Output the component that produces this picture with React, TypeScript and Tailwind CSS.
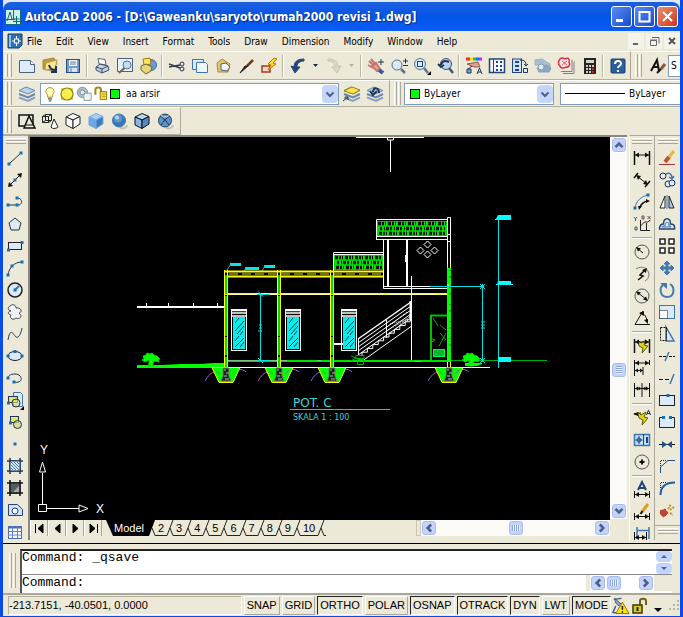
import type { ReactNode } from "react";

type Tool = { label: string; icon: ReactNode };

const NAVY = "#1d3557";
const BLUE = "#3f76ad";
const PALE = "#dbe9f8";

const dot = (x: number, y: number) => (
  <rect key={`${x}-${y}`} x={x - 1.5} y={y - 1.5} width="3" height="3" fill="#1670b8" stroke="none" />
);

const arrowUp = <path d="M4 10.500 L8 6.500 L12 10.500" fill="none" stroke="#4d6185" strokeWidth="3" />;

function Icon({ children, size = "h-5 w-5" }: { children: ReactNode; size?: string }) {
  return (
    <svg viewBox="0 0 20 20" className={`${size} shrink-0`} fill="none" stroke={NAVY} aria-hidden="true">
      {children}
    </svg>
  );
}

const sheets = (
  <>
    <path d="M2 6.500 L9 3 L18 6.500 L11 10Z" fill="#b9d4ee" stroke="#6b87ab" />
    <path d="M2 10 L11 13.500 L18 10" stroke="#6b87ab" strokeWidth="2" />
    <path d="M2 13.500 L11 17 L18 13.500" stroke="#8aa2c0" strokeWidth="2" />
  </>
);

const fileTools: Tool[] = [
  { label: "New", icon: <><path d="M2.500 4.500h11l4 4v8h-15z" fill="#dcecf9" stroke="#4a6180" /><path d="M13.500 4.500v4h4" fill="#fff" stroke="#4a6180" /></> },
  { label: "Open", icon: <><path d="M3 4 L14 2 L17 7 L12 15 L3 13Z" fill="#c59a35" stroke="#a08a4a" /><path d="M6 7 L17 4 L15 13 L5 14Z" fill="#fbe993" stroke="#b59c48" /><path d="M9 9c1 4 3 5 6 5M16 10v6h-5" strokeWidth="2" /></> },
  { label: "Save", icon: <><rect x="3.500" y="3.500" width="13" height="13" fill="#729bd0" stroke="#244c86" /><rect x="6" y="4" width="8" height="6" fill="#eef5fc" stroke="none" /><rect x="6" y="12" width="8" height="4" fill="#dbe4ee" stroke="none" /><path d="M7 6h6M7 8h6M8 12v4" stroke="#5c7fad" /></> },
];

const plotTools: Tool[] = [
  { label: "Plot", icon: <><path d="M6 2.500 L13 3.500 L14 9 L7 8Z" fill="#fff" stroke="#56657c" /><path d="M4 11 L8 8 L16 10 L17 14 L10 17 L4 14Z" fill="#c5d0de" stroke="#3d4c66" /><path d="M4 11 L10 13 L16 10M10 13v4" stroke="#3d4c66" /></> },
  { label: "Plot Preview", icon: <><path d="M2.500 2.500h15v13h-15z" fill="#e7f1fb" stroke="#4a6180" /><circle cx="12" cy="9" r="4" fill="#c2dcf3" stroke="#5c7086" /><path d="M9.500 12 L4 17" stroke="#7b5d50" strokeWidth="2" /></> },
  { label: "Publish", icon: <><circle cx="13" cy="9" r="5.500" fill="#6e9bd0" stroke="#3f6da5" /><path d="M5 3 L12 2 L13 8 L6 9Z" fill="#ffe45e" stroke="#a07c10" /><path d="M3 10 L8 8 L14 11 L13 15 L8 18 L3 14Z" fill="#e6d77a" stroke="#6b6635" /></> },
];

const clipTools: Tool[] = [
  { label: "Cut", icon: <><path d="M2 8 L13 12 M2 11 L13 9" stroke="#333d4e" strokeWidth="1.500" /><circle cx="15" cy="8" r="2" /><circle cx="15" cy="13" r="2" /></> },
  { label: "Copy", icon: <><path d="M2.500 3.500h11v10h-11z" fill="#dbe9f8" stroke={BLUE} /><path d="M6.500 6.500h9l2 2v8h-11z" fill="#eef5fc" stroke={BLUE} /></> },
  { label: "Paste", icon: <><path d="M4 7 L9 3 L17 8 L15 16 L5 16Z" fill="#e9c567" stroke="#a88445" /><path d="M8 8 L13 7 L17 11 L14 15 L8 14Z" fill="#eef5fc" stroke="#4a6180" /></> },
  { label: "Match Properties", icon: <><path d="M17 4 L11 10" stroke="#7b3a1c" strokeWidth="2.500" /><path d="M12 10 L4 17 L9 10Z" fill="#222" stroke="#222" /></> },
  { label: "Block Editor", icon: <><rect x="3" y="10" width="8" height="6" fill="#f4d8c8" stroke="#a4382a" strokeWidth="1.500" /><path d="M15 2 L9 8 L12 9 L9 14 L17 8 L14 7 L18 3Z" fill="#ffd626" stroke="#b07a00" /></> },
];

const undoIcon = <path d="M16 3 C9 3 6 6 6 11 L3 10 L7 17 L12 11 L9 11 C9 7 12 5 16 5Z" fill="#24447c" stroke="#24447c" />;
const redoIcon = <path d="M4 3 C11 3 14 6 14 11 L17 10 L13 17 L8 11 L11 11 C11 7 8 5 4 5Z" fill="#dbd9ce" stroke="#c3c1b6" />;

const zoomTools: Tool[] = [
  { label: "Pan", icon: <><path d="M3 5 L8 10 M5 3 L10 9 M2 9 L7 12 M6 10 L10 7 L14 13 L11 15Z" stroke="#c7766e" strokeWidth="2" fill="#e8a79c" /><path d="M13 14 L17 17" stroke="#315f9c" strokeWidth="4" /><path d="M15 3v6M12 6h6" /></> },
  { label: "Zoom Realtime", icon: <><circle cx="8" cy="9" r="5" fill="#d7eaf8" stroke="#5f7286" /><path d="M12 13 L16 17" stroke="#5f7286" strokeWidth="2.500" /><path d="M14 5h5M16.500 2.500v5M14 9.500h5" /></> },
  { label: "Zoom Window", icon: <><circle cx="8" cy="8" r="5.500" fill="#d7eaf8" stroke="#5f7286" /><rect x="5.500" y="5.500" width="5" height="5" stroke="#24447c" /><path d="M12 12 L16 17" stroke="#5f7286" strokeWidth="2.500" /><path d="M19 15v4h-4z" fill="#000" stroke="none" /></> },
  { label: "Zoom Previous", icon: <><circle cx="11" cy="8" r="5.500" fill="#b9d4ee" stroke="#415671" /><path d="M14 12 L18 17" stroke="#415671" strokeWidth="2.500" /><path d="M14 6 C10 4 7 5 6 9 M3 8 L6 11 L9 9" strokeWidth="2" /></> },
];

const paletteTools: Tool[] = [
  { label: "Properties", icon: <><path d="M2 3h4" stroke="#f22" strokeWidth="3" /><path d="M6 3h3" stroke="#fd0" strokeWidth="3" /><path d="M9 3h3" stroke="#1c3" strokeWidth="3" /><path d="M12 3h3" stroke="#16f" strokeWidth="3" /><path d="M15 3h3" stroke="#e1f" strokeWidth="3" /><path d="M3 8 L14 6 L16 11 L10 11Z" fill="#e2a096" stroke="#9b5448" /><path d="M3 14 L8 10M13 18l2.500-6 2.500 6M14 16h3" /><path d="M3 13h4v4h-4z" fill="#7ba3d6" stroke={NAVY} /></> },
  { label: "DesignCenter", icon: <><rect x="2.500" y="3" width="15" height="13.500" fill="#f3f8fd" stroke="#24447c" strokeWidth="1.500" /><path d="M6.500 3v13" stroke="#24447c" /><path d="M9 6h2M13 6h2M9 10h2M13 10h2M9 14h2M13 14h2" stroke="#24447c" strokeWidth="2" /></> },
  { label: "Tool Palettes", icon: <><rect x="2.500" y="3" width="9" height="13.500" fill="#cfe3f7" stroke="#24447c" /><path d="M5 6h4M5 10h4M5 14h4" stroke="#24447c" strokeWidth="2" /><path d="M10 4 C15 4 16 6 16 9" /><path d="M13.500 12.500h4v4h-4z" fill="#dbe9f8" /><path d="M14 8l2 2 2-2" /></> },
  { label: "Sheet Set Manager", icon: <><path d="M2 4 L9 3 L17 8 L17 12 L9 9 L2 9Z" fill="#a9bfd5" stroke="#9fb0c1" /><path d="M4 12 L14 9 L18 12 L16 16 L6 16Z" fill="#8ca7c4" stroke="#8b9fb4" /><circle cx="8" cy="11" r="3" fill="#dce9f3" stroke="#8599ae" /></> },
  { label: "Markup Set Manager", icon: <><path d="M7 17.500h11v-12M5 15.500h11v-12" stroke="#7d7f86" /><path d="M4 3 C6 1 9 3 9 3 C12 1 14 3 13 6 C15 9 12 12 10 11 C7 13 4 12 4 10 C2 9 2 5 4 3Z" fill="#fbe3e4" stroke="#dc2e45" strokeWidth="1.500" /><path d="M6 5l5 4M11 5l-5 4" stroke="#e0566a" /></> },
  { label: "QuickCalc", icon: <><rect x="5.500" y="2.500" width="11" height="15" fill="#2c2020" stroke="#2c2020" /><rect x="7" y="4" width="8" height="3" fill="#cfd8cf" stroke="none" /><path d="M7 10h2M10 10h2M13 10h2M7 13h2M10 13h2M7 16h2M10 16h2" stroke="#fff" strokeWidth="1.500" /><path d="M13 13h2M13 16h2" stroke="#e33" strokeWidth="1.500" /></> },
];

const helpIcon = <><rect x="3" y="3" width="14" height="14" rx="1" fill="#2c5f9a" stroke="#193f6e" /><path d="M7 8 C7 4 13 4 13 7.500 C13 10 10 9.500 10 12M10 14v2" stroke="#fff" strokeWidth="2" /></>;

const cube = (top: string, front: string, side: string, stroke: string) => (
  <>
    <path d="M3 6 L10 2.500 L17 5.500 L10 9Z" fill={top} stroke={stroke} />
    <path d="M3 6 L10 9 V17.500 L3 14Z" fill={front} stroke={stroke} />
    <path d="M10 9 L17 5.500 V13 L10 17.500Z" fill={side} stroke={stroke} />
  </>
);

const shadeTools: Tool[] = [
  { label: "2D Wireframe", icon: <><path d="M2 4h14v11H2z" stroke="#111" strokeWidth="1.500" /><path d="M12 5 L18 17 H7Z" fill="#ece9d8" stroke="#111" strokeWidth="1.500" /><path d="M9 14h7" stroke="#111" /></> },
  { label: "3D Wireframe", icon: <><path d="M2.500 5.500h6v6h-6zM5.500 3.500h6v6h-6zM2.500 5.500l3-2M8.500 5.500l3-2M2.500 11.500l3-2M8.500 11.500l3-2" stroke="#222" /><path d="M14 8 L11 16 C12 18 16 18 18 16Z" fill="#fff" stroke="#222" /></> },
  { label: "Hidden", icon: cube("#fff", "#fff", "#fff", "#222") },
  { label: "Flat Shaded", icon: cube("#a6d0f8", "#6da9e6", "#3e78be", "#75a7dd") },
  { label: "Gouraud Shaded", icon: <><path d="M11 17c5 1 7-1 7-3" stroke="#c2c0b4" strokeWidth="2" /><circle cx="10" cy="9.500" r="6.500" fill="#3b78b2" stroke="#3b78b2" /><circle cx="9" cy="7.500" r="4" fill="#5f98cc" stroke="none" /><circle cx="8" cy="6.500" r="2" fill="#b4d8f4" stroke="none" /></> },
  { label: "Flat Shaded, Edges On", icon: cube("#b5d7f6", "#86b5e6", "#5587c2", "#111") },
  { label: "Gouraud Shaded, Edges On", icon: <><path d="M11 17c5 1 7-1 7-3" stroke="#c2c0b4" strokeWidth="2" /><circle cx="10" cy="9.500" r="6.500" fill="#5b91c6" stroke="#253f60" /><path d="M5 5 C9 7 12 11 14 14M15 5 C11 7 8 11 6 14" stroke="#1d3557" /><path d="M6 4.500 C9 6.500 12 6.500 14 4.500" stroke="#cfe2f4" /></> },
];

const drawTools: Tool[] = [
  { label: "Line", icon: <><path d="M4 16 L16 5" />{dot(4, 16)}{dot(16, 5)}</> },
  { label: "Construction Line", icon: <><path d="M4 16 L16 4" stroke="#111" /><path d="M3 17l1-5 4 4zM17 3l-1 5-4-4z" fill="#111" stroke="none" />{dot(10, 10)}</> },
  { label: "Polyline", icon: <><path d="M3 13 H13 C18 13 18 6 12 6" />{dot(3, 13)}{dot(12, 13)}{dot(12, 6)}</> },
  { label: "Polygon", icon: <path d="M10 4 L16 9 L14 16 H6 L4 9Z" fill={PALE} stroke="#333" /> },
  { label: "Rectangle", icon: <><rect x="3.500" y="6.500" width="13" height="7" fill={PALE} stroke="#222" />{dot(3.5, 14)}{dot(17, 6.5)}</> },
  { label: "Arc", icon: <><path d="M3 17 C4 10 9 4 17 4" />{dot(3, 17)}{dot(7, 8)}{dot(17, 4)}</> },
  { label: "Circle", icon: <><circle cx="10" cy="10" r="7" fill={PALE} stroke="#222" strokeWidth="1.500" /><path d="M10 10 L14 6" stroke={BLUE} strokeWidth="2" />{dot(10, 10)}</> },
  { label: "Revision Cloud", icon: <path d="M5 4 C9 1 11 4 11 6 C16 5 18 10 14 11 C18 14 15 18 11 16 C8 19 4 16 6 13 C2 12 3 9 6 9 C2 8 3 5 5 4Z" fill="#f0f3f6" stroke="#3d4450" /> },
  { label: "Spline", icon: <path d="M3 16 C5 4 8 9 10 12 C13 16 16 10 17 4" /> },
  { label: "Ellipse", icon: <><ellipse cx="10" cy="10" rx="7" ry="4.500" fill={PALE} stroke="#222" />{dot(3, 10)}{dot(17, 10)}{dot(10, 5.5)}</> },
  { label: "Ellipse Arc", icon: <><path d="M9 14 C19 16 18 6 10 6 C5 6 3 8 3 10" />{dot(3, 10)}{dot(9, 14)}</> },
  { label: "Insert Block", icon: <><path d="M8.500 2.500h7l2 2v12h-9z" fill={PALE} stroke={BLUE} /><rect x="3.500" y="6.500" width="9" height="6" fill="#e1ea62" /><circle cx="11" cy="13" r="4" fill="#cfd98a" fillOpacity=".7" stroke="#333" /><path d="M19 16v4h-4z" fill="#000" stroke="none" />{dot(3.5, 13)}</> },
  { label: "Make Block", icon: <><rect x="5.500" y="4.500" width="8" height="6" fill="#e1ea62" /><circle cx="12.500" cy="12.500" r="4" fill="#cfd98a" fillOpacity=".7" stroke="#333" />{dot(5.5, 11)}</> },
  { label: "Point", icon: dot(10, 10) },
  { label: "Hatch", icon: <><path d="M2 5h16M2 15h16M5 2v16M15 2v16" strokeWidth="1.500" /><path d="M5 5h10v10H5z" fill="#d9e9f8" /><path d="M6 6l8 8M9 6l5 5M6 9l5 5M12 6l2 2M6 12l2 2" stroke={BLUE} /></> },
  { label: "Gradient", icon: <><path d="M2 5h16M2 15h16M5 2v16M15 2v16" stroke="#111" strokeWidth="1.500" /><path d="M5 5h10v10H5z" fill="#555b60" stroke="#111" /><path d="M8 14l6-6v6z" fill="#a3a8ac" stroke="none" /></> },
  { label: "Region", icon: <><path d="M3.500 4.500h9l5 5v6h-14z" fill="#cfe2f5" stroke="#24447c" /><circle cx="10" cy="11" r="3" fill="#fff" stroke="#24447c" /></> },
  { label: "Table", icon: <><rect x="3.500" y="4.500" width="13" height="12" fill="#fff" stroke="#4c6db0" /><path d="M3 5.500h14" stroke="#4c6db0" strokeWidth="2" /><path d="M3 9.500h14M3 13h14M7.500 4v12M12.500 4v12" stroke="#5c84cc" /></> },
];

const hDim = (y: number, a = 3, b = 17) => (
  <>
    <path d={`M${a} ${y} H${b}`} stroke="#111" />
    <path d={`M${a} ${y} l4 -2.500v5zM${b} ${y} l-4 -2.500v5z`} fill="#111" stroke="none" />
  </>
);

const bolt = <path d="M9 7 L6 4 L7 10 L11 12 L10 17 L16 10 L12 9 L14 4Z" fill="#e2d21a" stroke="#5f5a00" />;

const dimensionGroups: Tool[][] = [
  [
    { label: "Linear Dimension", icon: <><path d="M2.500 3v14M17.500 3v14" stroke="#111" strokeWidth="1.500" />{hDim(7)}</> },
    { label: "Aligned Dimension", icon: <><path d="M5 6 L15 14" stroke="#111" /><path d="M2 8l4-5M13 17l5-6" stroke="#111" strokeWidth="1.500" /><path d="M4 5l5 1-3 4zM16 15l-5-1 3-4z" fill="#111" stroke="none" /></> },
    { label: "Arc Length", icon: <><path d="M3 16 C4 9 9 4 17 3" stroke={BLUE} /><path d="M8 16 C8 13 12 9 16 9" stroke="#111" strokeWidth="1.500" /><path d="M7 18l-1-4h4zM18 9l-4-2v4z" fill="#111" stroke="none" />{dot(3, 16)}{dot(16, 3)}</> },
    { label: "Ordinate Dimension", icon: <><path d="M8.500 6v10.500H18M8.500 12l4-4M12.500 8h3l3-2M14.500 9v7" stroke="#222" /><path d="M2 3l1.500 2L5 3M3.500 5v2M10 2h2v3h-2zM15.500 2l3 3M18.500 2l-3 3M3 13h2v3H3z" stroke="#555" /></> },
  ],
  [
    { label: "Radius Dimension", icon: <><circle cx="10" cy="10" r="7" stroke="#555" /><path d="M11 11 L5 6" stroke="#111" /><path d="M4 5l5 1.500-3 3z" fill="#111" stroke="none" /></> },
    { label: "Jogged Radius", icon: <><path d="M4 5 C10 1 16 4 17 10 C17 14 15 16 13 17" stroke="#777" /><path d="M6 16 L11 12 L8 11 L13 6" stroke="#111" strokeWidth="1.500" /><path d="M15 4l-1 5-4-3z" fill="#111" stroke="none" /></> },
    { label: "Diameter Dimension", icon: <><circle cx="10" cy="10" r="7" stroke="#555" /><path d="M5 6 L15 14" stroke="#111" /><path d="M4 5l5 1.500-3 3zM16 15l-5-1.500 3-3z" fill="#111" stroke="none" /></> },
    { label: "Angular Dimension", icon: <><path d="M11 3 L3 16.500 H18" stroke="#111" /><path d="M8 5 C13 5 15 10 15 14" stroke="#111" /><path d="M7 5l5-2v5zM16 16l-4-4 4-1z" fill="#111" stroke="none" /></> },
  ],
  [
    { label: "Quick Dimension", icon: <><path d="M2.500 3v14M17.500 3v14" stroke="#111" strokeWidth="1.500" />{bolt}{hDim(6)}</> },
    { label: "Baseline Dimension", icon: <><path d="M2.500 2v16M11 9v8M17.500 2v5" stroke="#111" />{hDim(5)}<path d="M3 12.500h8" stroke="#111" /><path d="M3 12.500l3-2v4zM11 12.500l-3-2v4z" fill="#111" stroke="none" /></> },
    { label: "Continue Dimension", icon: <><path d="M2.500 3v14M10 3v14M17.500 3v14" stroke="#111" /><path d="M3 8.500h14" stroke="#111" /><path d="M3 8.500l3-2v4zM9.500 8.500l-3-2v4zM10.500 8.500l3-2v4zM17 8.500l-3-2v4z" fill="#111" stroke="none" /></> },
  ],
  [
    { label: "Quick Leader", icon: <><path d="M2 6 L9 5" stroke="#111" /><path d="M1 6l5-2v4z" fill="#111" stroke="none" />{bolt}<path d="M14.500 7l2-5 2 5M15 5.500h3" /></> },
    { label: "Tolerance", icon: <><rect x="2.500" y="4.500" width="15" height="11" fill="#bfe0f7" stroke={BLUE} strokeWidth="1.500" /><path d="M11.500 4v11M7 6v8M3.500 10h7" stroke="#24447c" /><circle cx="7" cy="10" r="2" stroke="#24447c" /><path d="M15 7v6" stroke="#24447c" strokeWidth="2" /></> },
    { label: "Center Mark", icon: <><circle cx="10" cy="10" r="7" stroke="#555" /><path d="M7.500 10h5M10 7.500v5" stroke="#111" strokeWidth="2" /></> },
  ],
  [
    { label: "Dimension Edit", icon: <><path d="M6 10 L10 2 L14 10M7.500 8h5" stroke="#24447c" strokeWidth="2" /><path d="M2.500 11v7M17.500 11v7" stroke="#111" />{hDim(14.5)}</> },
    { label: "Dimension Text Edit", icon: <><path d="M16 2 L10 10" stroke="#e09b20" strokeWidth="3" /><path d="M10.500 9l-2 3" stroke="#111" strokeWidth="2" /><path d="M2.500 11v7M17.500 11v7" stroke="#111" />{hDim(14.5)}</> },
    { label: "Dimension Update", icon: <><path d="M5 3v12M17 3v12M5 6.500h12" stroke={BLUE} strokeWidth="1.500" /><path d="M2.500 8v10M14.500 8v10" stroke="#111" />{hDim(13.5, 3, 14)}</> },
  ],
];

const modifyTools: Tool[] = [
  { label: "Erase", icon: <><path d="M17 3 L12 9" stroke="#e5b73c" strokeWidth="3" /><path d="M12 9 L8 14" stroke="#c2532f" strokeWidth="4" /><path d="M2 16.500h16" stroke="#a33" /></> },
  { label: "Copy Object", icon: <><circle cx="6" cy="6" r="3" /><circle cx="11" cy="14" r="3" fill={PALE} /><circle cx="15" cy="13" r="3" fill={PALE} /><path d="M9 4 C13 2 15 5 15 8M12 7l3 2 2-3" stroke={BLUE} strokeWidth="1.500" /></> },
  { label: "Mirror", icon: <><path d="M8 4v12H3z" fill="#fff" stroke="#222" /><path d="M12 4v12h5z" fill="#a9cdf0" stroke="#222" /><path d="M10 3v14" stroke={BLUE} /></> },
  { label: "Offset", icon: <><path d="M2.500 15h15v-2c0-2-2-3-4-3 0-7-7-7-7 0-2 0-4 1-4 5z" stroke="#24447c" strokeWidth="1.500" /><path d="M5 13h9c0-1-1-1-2-1 0-5-4-5-4 0-2 0-3 0-3 1z" fill={PALE} stroke={BLUE} /></> },
  { label: "Array", icon: <path d="M3 3h5v5H3zM12 3h5v5h-5zM3 12h5v5H3zM12 12h5v5h-5z" fill="#fff" stroke="#222" strokeWidth="1.500" /> },
  { label: "Move", icon: <path d="M10 3l3 3h-2v3h3V7l3 3-3 3v-2h-3v3h2l-3 3-3-3h2v-3H6v2l-3-3 3-3v2h3V6H7z" fill="#4579b0" stroke="#4579b0" /> },
  { label: "Rotate", icon: <><path d="M6 5 C2 8 3 17 10 17 C18 17 18 7 13 4" stroke="#4579b0" strokeWidth="2" /><path d="M3 3h7v6z" fill="#4579b0" stroke="none" /></> },
  { label: "Scale", icon: <><rect x="2.500" y="3.500" width="15" height="13" fill="#dceaf8" stroke={BLUE} /><path d="M2.500 8.500h8v8h-8z" fill="#fff" stroke="#111" strokeDasharray="1 1" /></> },
  { label: "Stretch", icon: <><path d="M9 3l8 14H9z" fill={PALE} stroke={BLUE} strokeWidth="1.500" /><path d="M3.500 3.500h6v13h-6z" stroke="#111" strokeDasharray="2 1" /></> },
  { label: "Trim", icon: <><path d="M2 10.500h7M12 10.500h6" stroke="#111" strokeDasharray="3 1" /><path d="M12 6L8 15" stroke={BLUE} strokeWidth="1.500" /></> },
  { label: "Extend", icon: <><path d="M2 11.500h11" stroke="#111" strokeDasharray="4 2" /><path d="M17 6l-4 10" stroke={BLUE} strokeWidth="1.500" /></> },
  { label: "Break at Point", icon: <><rect x="2.500" y="5.500" width="15" height="10" fill={PALE} stroke="#222" />{dot(11, 5.5)}</> },
  { label: "Break", icon: <><path d="M6 5.500H2.500v10h15v-10H14" fill={PALE} stroke="#222" />{dot(6.5, 5.5)}{dot(13.5, 5.5)}</> },
  { label: "Join", icon: <><path d="M2 10.500h16" stroke="#111" /><path d="M5 7l5 3.500-5 3.500zM15 7l-5 3.500 5 3.500z" fill="#1e5083" stroke="none" /></> },
  { label: "Chamfer", icon: <><path d="M3.500 17V11L11 4.500H18" stroke="#24447c" /><path d="M3.500 10V4.500H10" stroke="#222" strokeDasharray="1 1" /></> },
  { label: "Fillet", icon: <><path d="M3.500 17C3.500 9 8 4.500 18 4.500" stroke="#24609c" strokeWidth="2" /><path d="M3.500 10V4.500H10" stroke="#222" strokeDasharray="1 1" /></> },
  { label: "Explode", icon: <><path d="M3 11l5-2 3 4-4 4-3-2z" fill="#c9412c" stroke="#a8392a" strokeDasharray="3 1" /><path d="M11 9l3-5M13 10l4-3M13 13l3 2" stroke="#d88b28" strokeWidth="2" strokeDasharray="2 1" /></> },
];

const statusToggles = [
  { name: "SNAP", on: false },
  { name: "GRID", on: false },
  { name: "ORTHO", on: true },
  { name: "POLAR", on: false },
  { name: "OSNAP", on: true },
  { name: "OTRACK", on: true },
  { name: "DYN", on: true },
  { name: "LWT", on: false },
  { name: "MODE", on: true },
];

const menus = ["File", "Edit", "View", "Insert", "Format", "Tools", "Draw", "Dimension", "Modify", "Window", "Help"];
const layouts = ["2", "3", "4", "5", "6", "7", "8", "9", "10"];

function ToolButton({ tool, side = false }: { tool: Tool; side?: boolean }) {
  return (
    <button
      type="button"
      aria-label={tool.label}
      title={tool.label}
      className={`flex shrink-0 items-center justify-center ${side ? "h-[22px] w-6" : "h-6 w-[23px]"}`}
    >
      <Icon>{tool.icon}</Icon>
    </button>
  );
}

function Tools({ tools }: { tools: Tool[] }) {
  return <>{tools.map((t) => <ToolButton key={t.label} tool={t} />)}</>;
}

function Grip() {
  return (
    <div className="mr-[3px] ml-[2px] flex h-[23px] shrink-0 gap-px">
      <span className="w-[3px] border-r border-l border-l-white border-r-[#aca899]" />
      <span className="w-[3px] border-r border-l border-l-white border-r-[#aca899]" />
    </div>
  );
}

function SideGrip() {
  return (
    <div className="mx-auto mt-[2px] mb-[3px] flex w-5 shrink-0 flex-col">
      <span className="h-[3px] border-t border-b border-t-white border-b-[#aca899]" />
      <span className="h-[3px] border-t border-b border-t-white border-b-[#aca899]" />
    </div>
  );
}

function Sep() {
  return <span className="mx-[2px] h-[22px] w-[2px] shrink-0 border-r border-l border-l-[#bab6a5] border-r-white" />;
}

function MoreArrow({ label, color }: { label: string; color: string }) {
  return (
    <button type="button" aria-label={label} className="flex h-6 w-[13px] items-center justify-center">
      <svg viewBox="0 0 7 4" className="h-1 w-[7px]"><path d="M1 0h5L3.500 3Z" fill={color} /></svg>
    </button>
  );
}

function ComboArrow() {
  return (
    <span className="pointer-events-none flex h-[18px] w-4 shrink-0 items-center justify-center rounded-sm bg-[#c6d5fb]">
      <svg viewBox="0 0 16 16" className="h-4 w-4"><path d="M4.500 6.500 L8 10 L11.500 6.500" fill="none" stroke="#4d6185" strokeWidth="2" /></svg>
    </span>
  );
}

const turns = { up: "", down: "rotate-180", left: "-rotate-90", right: "rotate-90" };

function ScrollButton({ dir, label }: { dir: keyof typeof turns; label: string }) {
  return (
    <button
      type="button"
      aria-label={label}
      className="flex h-4 w-4 shrink-0 items-center justify-center rounded-sm border border-white bg-[#c3d3fc] shadow-[0_0_0_1px_#a9bce8_inset]"
    >
      <svg viewBox="0 0 16 16" className={`h-[14px] w-[14px] shrink-0 ${turns[dir]}`}>{arrowUp}</svg>
    </button>
  );
}

function Thumb({ vertical = false }: { vertical?: boolean }) {
  return (
    <span className="flex h-4 w-4 shrink-0 items-center justify-center rounded-sm border border-white bg-[#c3d3fc] shadow-[0_0_0_1px_#a9bce8_inset]">
      <svg viewBox="0 0 10 10" className={`h-[10px] w-[10px] ${vertical ? "rotate-90" : ""}`}>
        <path d="M1.500 2v6M3.500 2v6M5.500 2v6M7.500 2v6" stroke="#8ba4dc" />
        <path d="M2.500 2v6M4.500 2v6M6.500 2v6M8.500 2v6" stroke="#eef3ff" />
      </svg>
    </span>
  );
}

function TitleBar() {
  return (
    <header className="shrink-0 bg-[#dfe8fb]">
      <div className="mt-[2px] flex h-[29px] items-center rounded-t-lg bg-linear-to-b from-[#1c5fdc] via-[#0355ea] to-[#0a5cf5] px-[2px]">
        <svg viewBox="0 0 16 16" className="h-4 w-4 shrink-0 bg-[#cfeeea]">
          <path d="M0 .5h16M.5 0v16M0 15.500h16M15.500 0v16" stroke="#126d76" />
          <path d="M2 12 L5 3 L7 10 M1 10.500h9M8.500 1v9h6M11.500 7v8M8 12.500h7" fill="none" stroke="#0b6c78" />
        </svg>
        <h1 className="ml-1 grow truncate font-['DejaVu_Sans_Condensed','DejaVu_Sans',sans-serif] text-[12px] font-bold text-white [text-shadow:1px_1px_1px_#0a2a80]">
          AutoCAD 2006 - [D:\Gaweanku\saryoto\rumah2000 revisi 1.dwg]
        </h1>
        <div className="flex gap-[2px]">
          <button type="button" aria-label="Minimize" className="h-[21px] w-[21px] rounded-[3px] border border-white bg-linear-to-br from-[#5b8df5] to-[#1c48c8]">
            <svg viewBox="0 0 19 19"><path d="M4 13.500h7" stroke="#fff" strokeWidth="3" /></svg>
          </button>
          <button type="button" aria-label="Maximize" className="h-[21px] w-[21px] rounded-[3px] border border-white bg-linear-to-br from-[#5b8df5] to-[#1c48c8]">
            <svg viewBox="0 0 19 19"><path d="M4.500 4v10.500h10V4M4 5h11" fill="none" stroke="#fff" strokeWidth="2" /></svg>
          </button>
          <button type="button" aria-label="Close" className="h-[21px] w-[21px] rounded-[3px] border border-white bg-linear-to-br from-[#ee8a6c] to-[#cc3512]">
            <svg viewBox="0 0 19 19"><path d="M5 5l9 9M14 5l-9 9" stroke="#fff" strokeWidth="2" /></svg>
          </button>
        </div>
      </div>
    </header>
  );
}

function MenuBar() {
  return (
    <nav className="flex h-5 shrink-0 items-center pl-1">
      <svg viewBox="0 0 16 16" className="mr-1 h-4 w-4 shrink-0">
        <path d="M1 1h14v11l-3 3H1z" fill="#2872b5" stroke="#173f6e" />
        <path d="M3 2v12" stroke="#8fc0e8" strokeWidth="2" />
        <path d="M9.500 3v10M5 8h9" stroke="#fff" />
        <rect x="7.500" y="6" width="4" height="4" fill="#2872b5" stroke="#fff" />
      </svg>
      <div className="flex grow gap-[14px]">
        {menus.map((m) => <button key={m} type="button">{m}</button>)}
      </div>
      <div className="flex gap-[2px]">
        <button type="button" aria-label="Minimize drawing" className="h-4 w-4 bg-[#f5f3ea]"><svg viewBox="0 0 16 16"><path d="M5 11h5" stroke="#666" strokeWidth="2" /></svg></button>
        <button type="button" aria-label="Restore drawing" className="h-4 w-4 bg-[#f5f3ea]"><svg viewBox="0 0 16 16"><path d="M6 4.500h7v6M4.500 7.500h6v5h-6zM4 7h7" fill="none" stroke="#666" /></svg></button>
        <button type="button" aria-label="Close drawing" className="h-4 w-4 bg-[#f5f3ea]"><svg viewBox="0 0 16 16"><path d="M5 5l6 6M11 5l-6 6" stroke="#555" strokeWidth="2" /></svg></button>
      </div>
    </nav>
  );
}

const bar = "flex items-center border-t border-t-white border-b border-b-[#b5b19f]";

function StandardToolbar() {
  return (
    <div className="flex h-[29px] shrink-0">
      <div className={`${bar} shrink-0 border-r border-r-[#aca899] pr-px`}>
        <Grip />
        <Tools tools={fileTools} />
        <Sep />
        <Tools tools={plotTools} />
        <Sep />
        <Tools tools={clipTools} />
        <Sep />
        <ToolButton tool={{ label: "Undo", icon: undoIcon }} />
        <MoreArrow label="Undo list" color="#1b2c5c" />
        <ToolButton tool={{ label: "Redo", icon: redoIcon }} />
        <MoreArrow label="Redo list" color="#b4b2a8" />
        <Sep />
        <Tools tools={zoomTools} />
        <Sep />
        <Tools tools={paletteTools} />
        <Sep />
        <ToolButton tool={{ label: "Help", icon: helpIcon }} />
      </div>
      <div className={`${bar} min-w-0 grow pl-[2px]`}>
        <Grip />
        <ToolButton tool={{ label: "Text Style", icon: <><path d="M4 15 L10 4 L12 15M6 11h6" stroke="#111" strokeWidth="2" /><path d="M18 8 L14 13" stroke="#8a5a35" strokeWidth="3" /><path d="M14 13l-4 4" stroke="#111" strokeWidth="2" /></> }} />
        <select aria-label="Text style" className="h-[22px] min-w-0 grow appearance-none border border-r-0 border-[#7f9db9] bg-white pl-[2px]">
          <option value="standard">S</option>
        </select>
      </div>
    </div>
  );
}

function LayersToolbar() {
  return (
    <div className="flex h-[27px] shrink-0">
      <div className={`${bar} shrink-0 border-r border-r-[#aca899] pr-[3px]`}>
        <Grip />
        <ToolButton tool={{ label: "Layer Properties Manager", icon: sheets }} />
        <div className="mr-px ml-[2px] flex h-[22px] w-[299px] items-center gap-px border border-[#7f9db9] bg-white pl-px">
          <Icon size="h-4 w-4"><path d="M10 2 C5 2 3 8 7 11 V14 H13 V11 C17 8 15 2 10 2Z" fill="#fff9b0" stroke="#8a7c1e" /><path d="M7.500 16h5M8.500 18.500h3" stroke="#555" strokeWidth="1.500" /></Icon>
          <Icon size="h-4 w-4"><path d="M3 3h14v14H3z" fill="#f4e642" stroke="#d5c832" /><circle cx="10" cy="10" r="7.500" fill="#f8ee4c" stroke="#8c8420" strokeWidth="1.500" /></Icon>
          <Icon size="h-4 w-4"><circle cx="8" cy="8" r="6.500" fill="#a9bcc8" stroke="#6f8796" /><circle cx="8" cy="8" r="3" fill="#dfe8ed" stroke="#6f8796" /><path d="M12 9h7v9h-9v-4" fill="#eef3f7" stroke="#778899" /></Icon>
          <Icon size="h-4 w-4"><path d="M3 11 V5 C3 1 10 1 10 5 V9" stroke="#a08a12" strokeWidth="2.500" /><path d="M9 7h8v10H9z" fill="#f1dc3c" stroke="#76660c" /><path d="M11 10h5M11 13h5" stroke="#b59f1a" /></Icon>
          <span className="h-[10px] w-[10px] shrink-0 border border-black bg-[#00ff00]" />
          <select aria-label="Layer" className="ml-[5px] h-5 min-w-0 grow appearance-none bg-white outline-none">
            <option>aa arsir</option>
          </select>
          <ComboArrow />
        </div>
        <ToolButton tool={{ label: "Make Object's Layer Current", icon: <>{sheets}<path d="M2 7 L10 3 L18 6 L11 10Z" fill="#ffe14a" stroke="#a08413" /><path d="M1 17l5-4M3 13h3v3" /></> }} />
        <ToolButton tool={{ label: "Layer Previous", icon: <>{sheets}<path d="M14 9 C14 3 8 3 8 8M5 7l3 4 4-4" strokeWidth="2" /></> }} />
      </div>
      <div className={`${bar} min-w-0 grow overflow-hidden pl-[2px]`}>
        <Grip />
        <div className="flex h-[22px] w-[150px] shrink-0 items-center border border-[#7f9db9] bg-white pl-[5px]">
          <span className="h-[10px] w-[10px] shrink-0 border border-black bg-[#00ff00]" />
          <select aria-label="Color" className="ml-1 h-5 min-w-0 grow appearance-none bg-white outline-none">
            <option>ByLayer</option>
          </select>
          <ComboArrow />
        </div>
        <div className="ml-[6px] flex h-[22px] min-w-0 grow items-center border border-r-0 border-[#7f9db9] bg-white pl-1">
          <span className="h-px w-[60px] shrink-0 bg-black" />
          <select aria-label="Linetype" className="ml-1 h-5 min-w-0 grow appearance-none bg-white outline-none">
            <option>ByLayer</option>
          </select>
        </div>
      </div>
    </div>
  );
}

function Windowpane({ x }: { x: number }) {
  return (
    <g>
      <rect x={x + 0.5} y="309.500" width="15" height="41" fill="#000" stroke="#fff" />
      <path d={`M${x} 310.500h16M${x} 313h16M${x} 316h16`} stroke="#fff" strokeWidth="1.500" />
      <rect x={x + 2} y="317" width="12" height="32" fill="#00f0f0" />
      <path
        d={`M${x + 4} 323l4-5M${x + 4} 331l9-10M${x + 6} 334l7-8M${x + 4} 341l4-5M${x + 9} 335l3-4M${x + 4} 347l9-9M${x + 9} 347l4-5`}
        stroke="#003c48"
      />
    </g>
  );
}

function Footing({ x }: { x: number }) {
  return (
    <g fill="none">
      <path d={`M${x - 21} 381c3-5 6-9 11-9M${x + 11} 369c4 0 7 1 9 3`} stroke="#a060c8" />
      <path d={`M${x - 14} 367.500h28l-7 15h-14z`} fill="#00ff00" stroke="#ffff00" />
      <path d={`M${x - 3} 368h6v8l2 5h-10l2-5z`} fill="#182818" stroke="#708070" />
      <path d={`M${x - 2} 370h2M${x} 373h3M${x - 2} 376h3M${x - 1} 379h4`} stroke="#b0b8b0" />
      <path d={`M${x - 10} 371l4 3M${x + 10} 370l-4 4`} stroke="#708070" />
    </g>
  );
}

function Column({ x }: { x: number }) {
  return (
    <g>
      <path d={`M${x + 0.5} 270v98M${x + 3.5} 270v98`} stroke="#ffff00" />
      <path d={`M${x + 2} 276v91`} stroke="#00d800" strokeWidth="2" strokeDasharray="18 2 40 1" />
    </g>
  );
}

function Railing({ x, y, width }: { x: number; y: number; width: number }) {
  const rows = [0, 5, 10];
  return (
    <g>
      <rect x={x} y={y} width={width} height="15" fill="#00e000" />
      {rows.map((r) => (
        <path key={r} d={`M${x + 1 + (r % 3)} ${y + 2.5 + r}H${x + width - 1}`} stroke="#001800" strokeWidth="3.500" strokeDasharray={r === 5 ? "2 2 1 1 3 1" : "3 1 2 1 1 2"} />
      ))}
    </g>
  );
}

function Tree({ x, y }: { x: number; y: number }) {
  return (
    <path
      d={`M${x + 8} ${y + 12}v-4l-4 2-3-2 2-1-1-3 3-1 1-2 3 1 2-1 2 2 3 1 3 3-2 1 1 2-4-1-2 1v3l1 1h-6z`}
      fill="#00ff00"
      stroke="#00d000"
    />
  );
}

const rails = [0, 4, 8, 12, 16];
const steps = Array.from({ length: 9 }, () => "v-3.800h5.400").join("");

function Drawing() {
  return (
    <svg viewBox="30 137 580 383" preserveAspectRatio="xMinYMin meet" className="min-h-0 w-full grow bg-black" fill="none" role="img" aria-label="Section drawing POT. C">
      {/* crosshair */}
      <path d="M356 137.500h68M390.500 140v32M387.500 137v3h6v-3" stroke="#fff" />

      {/* fence wall and ground on the left */}
      <path d="M137 307h88" stroke="#fff" strokeWidth="2" />
      <path d="M146.500 303v3M168.500 303v3M193.500 303v3M217.500 303v3" stroke="#fff" />
      <path d="M137 365h24l20-1 20 0 12-1h12v5h-88z" fill="#00ff00" />
      <Tree x={141} y={352} />

      {/* roof leaders */}
      <path d="M230 263h11v3h-11zM245 267h14v3h-14zM264 265h11v3h-11z" fill="#00e8e8" />
      <path d="M231 264l-4 6M246 268l-3 4M265 266l-3 5" stroke="#00c0c0" />

      {/* railings and upper storey */}
      <Railing x={334} y={255} width={49} />
      <path d="M333.500 270v-17.500H383M333 254.500h50" stroke="#fff" />
      <Railing x={377} y={221} width={70} />
      <path d="M376.500 239.500v-20H447M376 236.500h71M376 239.500h71" stroke="#fff" />
      <path d="M383.500 240v48.500H447M384 286.500h64" stroke="#fff" />
      <path d="M388 240v46M407 240v46" stroke="#fff" strokeWidth="2" />
      <path d="M405.500 255v7" stroke="#fff" />
      <path d="M447.500 267v-49.500h3v49M447 234.500h3M447 241.500h3" stroke="#fff" />
      <path d="M427.500 241l3.500 3.500-3.500 3.500-3.500-3.500zM420.500 247l3.500 3.500-3.500 3.500-3.500-3.500zM434.500 247l3.500 3.500-3.500 3.500-3.500-3.500zM427.500 251l3.500 3.500-3.500 3.500-3.500-3.500z" stroke="#fff" />

      {/* roof and ring beams */}
      <path d="M225 271.500h158M225 276.500h158" stroke="#ffff00" strokeWidth="2" />
      <path d="M229 274h154" stroke="#e0e040" strokeDasharray="9 4" />
      <path d="M225 294h223" stroke="#ffff00" strokeWidth="2" />
      <path d="M229 294.500h217" stroke="#ffffa8" strokeDasharray="48 5" />

      <Windowpane x={231} />
      <Windowpane x={285} />
      <Windowpane x={341} />
      <path d="M334 344h9" stroke="#fff" strokeWidth="2" />

      {/* floor and ground lines */}
      <path d="M227 361h221" stroke="#00e000" strokeWidth="2" />
      <path d="M227 360.500h60M317 360.500h4M415 361.500h6" stroke="#80c080" />
      <path d="M227 367.500h263" stroke="#fff" />
      <path d="M448 360.500h99" stroke="#00b000" />
      <Column x={224} />
      <Column x={277} />
      <Column x={330} />
      <path d="M449 268v94" stroke="#00ff00" strokeWidth="4" />
      <path d="M447.500 264v4M450.500 264v4M448 284v3M447.500 362v6M450.500 362v6" stroke="#ffff00" />
      <path d="M450 270v90" stroke="#005000" strokeDasharray="1 5 2 9" />
      <Footing x={226} />
      <Footing x={279} />
      <Footing x={332} />
      <Footing x={449} />
      <Tree x={461} y={352} />
      <path d="M465 366v-3h17v1l-5 2z" fill="#00ff00" />

      {/* staircase */}
      <g stroke="#fff">
        {rails.map((r) => <path key={r} d={`M358 ${339 + r}l53-37`} strokeWidth={r === 0 ? 1.5 : 1} />)}
        <path d="M390 324l19-5M388 330l23-13M387 327l20-15M390 334l20-18" strokeDasharray="1 1" />
        <path d="M358.500 338v17M386.500 320v18" />
        <path d="M410.500 301v20" strokeWidth="2" />
        <path d={`M362 356${steps}`} />
        <path d="M363 360.500l48-34M411.500 276v84" />
      </g>
      <path d="M356 355.500h8v3h-8zM357.500 359.500h6v5h-6zM351 356l5 2-5 3" stroke="#00b000" />

      {/* door */}
      <path d="M431 360v-44.500h16" stroke="#00c000" strokeWidth="2" />
      <path d="M433 318l5 8M446 330l-6-5M446 333l-7 13M440 333l6 7M430 338l5 2-5 3" stroke="#00b000" />
      <rect x="433.500" y="349.500" width="11" height="7" fill="#00b830" stroke="#00ff40" />

      {/* dimensions */}
      <g stroke="#00e0e0">
        <path d="M260.500 293v68M257 294.500h13M258 291.500l5 5M257 360.500h13M258 358l5 5" />
        <path d="M430 286.500h54M482.500 284v78M480 284l5 5M480 289l5-5M480 358l5 5M480 363l5-5" />
        <path d="M498.500 215v153" />
        <path d="M259 325h3M259 328h3M258 331h4M481 322h4M481 325h4M481 328h4" />
      </g>
      <path d="M498 215h13v4h-15zM498 281h13v4h-14zM498 357h13v5h-13z" fill="#00ffff" />
      <path d="M495 219.500h16M496 284.500h17" stroke="#00ffff" />

      {/* sheet title */}
      <g fill="#38d8d8" className="font-['DejaVu_Sans',sans-serif]">
        <text x="293" y="407" fontSize="12">POT. C</text>
        <text x="293" y="420" fontSize="8">SKALA 1 : 100</text>
      </g>
      <path d="M290 409.500h100" stroke="#30c0c0" />

      {/* UCS icon */}
      <g stroke="#fff">
        <path d="M38.500 504.500h8v7h-8zM42.500 504v-31M47 508.500h32" />
        <path d="M42.500 462l3 10h-6zM88 508.500l-9 3.500v-7z" />
      </g>
      <g fill="#fff" className="font-['Liberation_Sans',sans-serif]" fontSize="12">
        <text x="40" y="454">Y</text>
        <text x="96" y="513">X</text>
      </g>
    </svg>
  );
}

const navIcons = [
  { label: "First tab", d: "M3.500 3v9M11 3v9L6 7.500z" },
  { label: "Previous tab", d: "M10 3v9L5 7.500z" },
  { label: "Next tab", d: "M5 3v9l5-4.500z" },
  { label: "Last tab", d: "M11.500 3v9M4 3v9l5-4.500z" },
];

function TabEdge() {
  return (
    <svg viewBox="0 0 10 16" className="h-4 w-[10px] shrink-0">
      <path d="M8 0 L2 15.500 M5 8 L8 15.500 M8 15.500h2 M0 15.500h2" fill="none" stroke="#222" />
    </svg>
  );
}

function LayoutTabs() {
  return (
    <div className="flex h-[17px] shrink-0 items-start bg-[#ece9d8] font-['Liberation_Sans',sans-serif] text-[11px] leading-4">
      {navIcons.map((n) => (
        <button key={n.label} type="button" aria-label={n.label} className="flex h-4 w-[18px] shrink-0 items-center justify-center border-r border-r-[#aca899] border-l border-l-white">
          <svg viewBox="0 0 15 15" className="h-[15px] w-[15px] shrink-0"><path d={n.d} fill="#000" stroke="#000" /></svg>
        </button>
      ))}
      <button type="button" className="ml-1 h-4 bg-black pr-[3px] pl-2 text-white [clip-path:polygon(0_0,100%_0,100%_100%,7px_100%)]">
        Model
      </button>
      <svg viewBox="0 0 10 16" className="h-4 w-[10px] shrink-0"><path d="M0 0h8L2 16H0z" fill="#000" /><path d="M5 8 L8 15.500h2" fill="none" stroke="#222" /></svg>
      {layouts.map((l) => (
        <div key={l} className="flex">
          <button type="button" className="h-4 border-b border-b-[#222] px-px">{l}</button>
          <TabEdge />
        </div>
      ))}
      <div className="ml-auto flex w-[194px] shrink-0 items-center justify-between bg-[#fbfaf6]">
        <span className="flex"><span className="h-4 w-[5px] border border-[#c9c5b2] bg-[#ece9d8]" /><ScrollButton dir="left" label="Scroll left" /></span>
        <Thumb />
        <ScrollButton dir="right" label="Scroll right" />
      </div>
    </div>
  );
}

function CommandPanel() {
  return (
    <section className="flex h-[55px] shrink-0 border-b-2 border-b-[#aca899] pt-[3px] font-['Liberation_Mono',monospace] text-[13px] leading-4">
      <div className="flex grow border-t border-t-black pt-[5px] pr-2">
        <div className="mt-1 mr-1 ml-[6px] flex h-[35px] gap-px">
          <span className="w-[3px] border-r border-l border-l-white border-r-[#aca899]" />
          <span className="w-[3px] border-r border-l border-l-white border-r-[#aca899]" />
        </div>
        <div className="grow border-t-2 border-l-2 border-t-[#222] border-l-[#555] bg-white">
          <div className="flex h-6 border-b border-b-[#888]">
            <output className="grow leading-[14px]">Command: _qsave</output>
            <div className="flex flex-col">
              <button type="button" aria-label="Previous command" className="flex h-[11px] w-4 items-center justify-center rounded-sm bg-[#c3d3fc]"><svg viewBox="0 0 6 4" className="h-1 w-[6px]"><path d="M0 3h6L3 0z" fill="#4d6185" /></svg></button>
              <button type="button" aria-label="Next command" className="mt-px flex h-[11px] w-4 items-center justify-center rounded-sm bg-[#c3d3fc]"><svg viewBox="0 0 6 4" className="h-1 w-[6px]"><path d="M0 0h6L3 3z" fill="#4d6185" /></svg></button>
            </div>
          </div>
          <div className="flex h-4 items-center">
            <label htmlFor="command">Command:</label>
            <input id="command" className="h-4 min-w-0 grow outline-none" />
            <div className="flex border-l-4 border-l-[#ece9d8]">
              <ScrollButton dir="left" label="Scroll command left" />
              <Thumb />
              <span className="w-4" />
              <ScrollButton dir="right" label="Scroll command right" />
            </div>
            <span className="h-4 w-[18px] bg-[#ece9d8]" />
          </div>
        </div>
      </div>
    </section>
  );
}

function StatusBar() {
  return (
    <footer className="flex h-[21px] shrink-0 items-center gap-[2px] pl-[5px] font-['Liberation_Sans',sans-serif] text-[11px] leading-[17px]">
      <div className="h-[19px] grow border border-[#b5b19f] border-r-white border-b-white">-213.7151, -40.0501, 0.0000</div>
      {statusToggles.map((t) => (
        <button
          key={t.name}
          type="button"
          aria-pressed={t.on}
          className={`h-[19px] shrink-0 border px-[2px] ${t.on ? "border-[#222] border-r-white border-b-white" : "border-white border-r-[#aca899] border-b-[#aca899]"}`}
        >
          {t.name}
        </button>
      ))}
      <div className="-ml-[2px] flex shrink-0 items-center">
        <button type="button" aria-label="Communication Center" className="h-5 w-[19px]">
          <Icon size="h-5 w-[19px]"><path d="M4 2c0 6 4 9 9 8z" fill="#8ba4c8" stroke="#44597c" /><path d="M3 3l8-1M5 10l-3 7h8" stroke="#44597c" strokeWidth="1.500" /><path d="M12 6l7 12H5z" fill="#ffe01a" stroke="#8b7500" /><path d="M12 10v4M12 15.500v1.500" stroke="#111" strokeWidth="1.500" /></Icon>
        </button>
        <button type="button" aria-label="Lock toolbars" className="h-5 w-5">
          <Icon><path d="M10 9V5c0-3 6-3 6 0v4" stroke="#6b6515" strokeWidth="2" /><path d="M3 9h9v8H3z" fill="#d6cc1c" stroke="#3c3904" strokeWidth="1.500" /><path d="M7.500 11v4" stroke="#222" strokeWidth="2" /></Icon>
        </button>
        <button type="button" aria-label="Status bar menu" className="flex h-5 w-4 items-end justify-center pb-1">
          <svg viewBox="0 0 8 4" className="h-1 w-2"><path d="M0 0h8L4 4z" fill="#000" /></svg>
        </button>
        <svg viewBox="0 0 14 14" className="h-[14px] w-[14px]"><path d="M11 2h2M11 6h2M7 6h2M11 10h2M7 10h2M3 10h2" stroke="#b8b4a2" strokeWidth="2" /></svg>
      </div>
    </footer>
  );
}

export default function App() {
  return (
    <div className="flex h-screen flex-col overflow-hidden border-x-[3px] border-b border-[#0a4ae6] bg-[#ece9d8] font-['DejaVu_Sans_Condensed','DejaVu_Sans',sans-serif] text-[10px] text-black">
      <TitleBar />
      <MenuBar />
      <StandardToolbar />
      <LayersToolbar />
      <div className="flex h-7 shrink-0">
        <div className={`${bar} border-r border-r-[#aca899] pr-1`}>
          <Grip />
          <Tools tools={shadeTools} />
        </div>
      </div>

      <main className="flex min-h-0 grow overflow-hidden">
        <aside className="flex w-[25px] shrink-0 flex-col border-t border-t-[#aca899]">
          <SideGrip />
          {drawTools.map((t) => <ToolButton key={t.label} tool={t} side />)}
        </aside>

        <section className="flex min-w-0 grow flex-col border-t-2 border-l-2 border-[#8b887a] pb-[3px]">
          <div className="flex min-h-0 grow">
            <div className="flex min-h-0 min-w-0 grow flex-col">
              <Drawing />
              <LayoutTabs />
            </div>
            <div className="mb-[18px] flex w-[17px] shrink-0 flex-col items-center bg-[#fbfaf6]">
              <ScrollButton dir="up" label="Scroll up" />
              <span className="grow-[5]" />
              <Thumb vertical />
              <span className="grow-[3]" />
              <ScrollButton dir="down" label="Scroll down" />
            </div>
          </div>
        </section>

        <aside className="ml-[2px] flex w-[26px] shrink-0 flex-col border-t border-r border-l border-t-[#aca899] border-r-[#aca899] border-l-white">
          <SideGrip />
          {dimensionGroups.map((group, i) => (
            <div key={group[0].label} className="flex flex-col">
              {i > 0 && <span className="mx-[2px] my-[2px] h-[2px] border-t border-b border-t-[#aca899] border-b-white" />}
              {group.map((t) => <ToolButton key={t.label} tool={t} side />)}
            </div>
          ))}
        </aside>

        <aside className="flex w-[25px] shrink-0 flex-col border-t border-t-[#aca899]">
          <SideGrip />
          {modifyTools.map((t) => <ToolButton key={t.label} tool={t} side />)}
          <span className="mt-1 border-t border-t-[#aca899]" />
          <SideGrip />
        </aside>
      </main>

      <CommandPanel />
      <StatusBar />
    </div>
  );
}
